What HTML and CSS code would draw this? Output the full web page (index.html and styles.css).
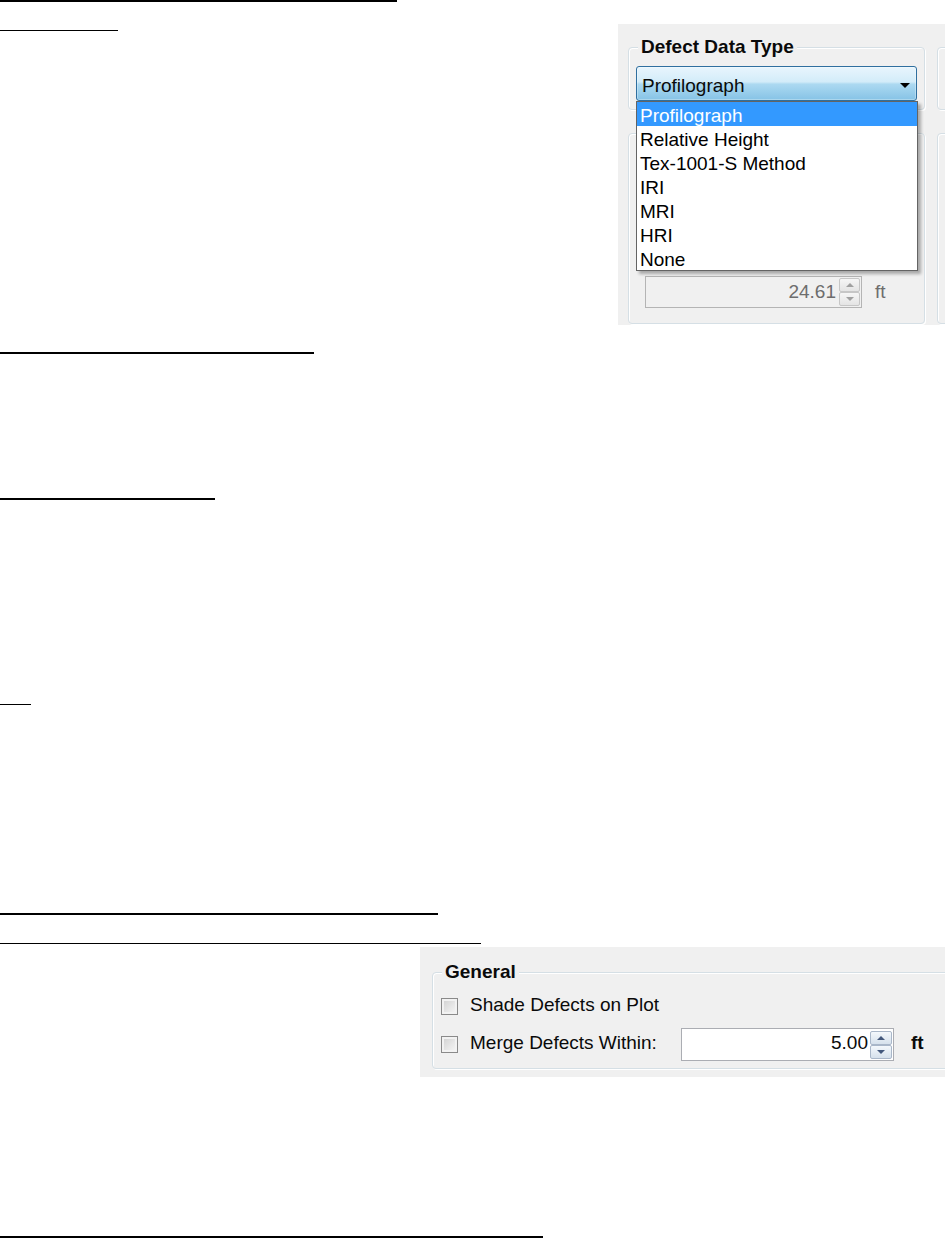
FILE: index.html
```html
<!DOCTYPE html>
<html>
<head>
<meta charset="utf-8">
<link rel="stylesheet" href="styles.css">
</head>
<body>
<div class="page">
  <div class="rule thick w397 mt0"></div>
  <div class="top-row">
    <div class="rule thin w118 mt6"></div>
    <div class="panel panel-defect">
      <div class="gb gb-type">
        <div class="gb-title">Defect Data Type</div>
        <div class="combo"><span>Profilograph</span><span class="caret"></span></div>
      </div>
      <div class="gb gb-side"></div>
      <div class="gb gb-params">
        <div class="spin-row">
          <div class="num num-disabled">
            <span class="val">24.61</span>
            <span class="spin"><span class="spin-btn up"></span><span class="spin-btn down"></span></span>
          </div>
          <span class="unit unit-disabled">ft</span>
        </div>
      </div>
      <div class="gb gb-side"></div>
      <ul class="dropdown">
        <li class="sel">Profilograph</li>
        <li>Relative Height</li>
        <li>Tex-1001-S Method</li>
        <li>IRI</li>
        <li>MRI</li>
        <li>HRI</li>
        <li>None</li>
      </ul>
    </div>
  </div>
  <div class="rule thick w314 mt27"></div>
  <div class="rule thick w215 mt144"></div>
  <div class="rule thin w31 mt204"></div>
  <div class="rule thick w438 mt208"></div>
  <div class="rule thin w481 mt28"></div>
  <div class="panel panel-general">
    <div class="gb gb-general">
      <div class="gb-title">General</div>
      <div class="check-row row1">
        <span class="cb"></span>
        <span class="lbl">Shade Defects on Plot</span>
      </div>
      <div class="check-row row2">
        <span class="cb"></span>
        <span class="lbl lbl-merge">Merge Defects Within:</span>
        <div class="num num-white">
          <span class="val">5.00</span>
          <span class="spin spin-blue"><span class="spin-btn up"></span><span class="spin-btn down"></span></span>
        </div>
        <span class="unit unit-bold">ft</span>
      </div>
    </div>
  </div>
  <div class="rule thick w543 mt159"></div>
</div>
</body>
</html>
```

FILE: styles.css
```css
html, body {
  margin: 0;
  padding: 0;
  background: #ffffff;
}

.page {
  width: 945px;
  height: 1238px;
  overflow: hidden;
  font-family: "Liberation Sans", Arial, sans-serif;
}

.rule { background: #000; }
.thick { height: 2px; }
.thin { height: 1px; }
.w397 { width: 397px; }
.w118 { width: 118px; }
.w314 { width: 314px; }
.w215 { width: 215px; }
.w31 { width: 31px; }
.w438 { width: 438px; }
.w481 { width: 481px; }
.w543 { width: 543px; }
.mt0 { margin-top: 0; }
.mt6 { margin-top: 6px; }
.mt27 { margin-top: 27px; }
.mt144 { margin-top: 144px; }
.mt204 { margin-top: 204px; }
.mt208 { margin-top: 208px; }
.mt28 { margin-top: 28px; }
.mt159 { margin-top: 159px; }

.top-row {
  margin-top: 22px;
  display: flex;
  justify-content: space-between;
  align-items: flex-start;
}

.panel {
  background: #f0f0f0;
  color: #0a0a0a;
  font-size: 19px;
  line-height: 22px;
}

.panel-defect {
  position: relative;
  width: 327px;
  height: 301px;
  box-sizing: border-box;
  padding: 23px 0 1px 10px;
  display: grid;
  grid-template-columns: 297px 30px;
  grid-template-rows: 63px 191px;
  column-gap: 12px;
  row-gap: 23px;
  overflow: hidden;
}

.gb {
  box-sizing: border-box;
  border: 1px solid #d5dfe5;
  border-radius: 4px;
  box-shadow: inset 1px 1px 0 #fff, 1px 1px 0 #fff;
}

.gb-title {
  font-weight: bold;
  margin: -12px 0 0 9px;
  padding: 0 3px;
  background: #f0f0f0;
  width: max-content;
  color: #0a0a0a;
}

.combo {
  margin: 8px 0 0 7px;
  width: 281px;
  height: 35px;
  box-sizing: border-box;
  border: 1px solid #2f6f9f;
  border-radius: 3px;
  background: linear-gradient(to bottom, #e8f5fd 0%, #d3ecf9 45%, #acd9f1 52%, #86c3e6 100%);
  box-shadow: inset 0 0 0 1px rgba(255,255,255,0.3);
  display: flex;
  align-items: center;
  justify-content: space-between;
  padding: 4px 6px 0 5px;
  color: #0a0a0a;
}

.caret {
  width: 0;
  height: 0;
  border-left: 5px solid transparent;
  border-right: 5px solid transparent;
  border-top: 5px solid #000;
}

.gb-params {
  display: flex;
  flex-direction: column;
  justify-content: flex-end;
  padding: 0 0 15px 16px;
}

.spin-row {
  display: flex;
  align-items: center;
}

.num {
  box-sizing: border-box;
  display: flex;
  align-items: center;
  justify-content: flex-end;
}

.num-disabled {
  width: 217px;
  height: 32px;
  border: 1px solid #b4b4b4;
  background: #f0f0f0;
  color: #6d6d6d;
}

.num-white {
  width: 213px;
  height: 33px;
  border: 1px solid #abadb3;
  background: #fff;
  color: #0a0a0a;
  padding-bottom: 3px;
}

.spin {
  display: flex;
  flex-direction: column;
  width: 21px;
  height: 28px;
  margin: 0 1px 0 3px;
}

.num-white .spin {
  margin: 3px 1px 0 2px;
  width: 22px;
}

.spin-btn {
  flex: 1;
  box-sizing: border-box;
  border: 1px solid #c6c6c6;
  border-radius: 2px;
  background: linear-gradient(to bottom, #f6f6f6, #e4e4e4);
  display: flex;
  align-items: center;
  justify-content: center;
}

.spin-btn::before {
  content: "";
  width: 0;
  height: 0;
  border-left: 4px solid transparent;
  border-right: 4px solid transparent;
}

.spin-btn.up::before { border-bottom: 4px solid #a0a0a0; }
.spin-btn.down::before { border-top: 4px solid #a0a0a0; }

.spin-blue .spin-btn {
  border-color: #a9b7c9;
  background: linear-gradient(to bottom, #f4f8fc, #d6e1ec);
}
.spin-blue .spin-btn.up::before { border-bottom-color: #43587c; }
.spin-blue .spin-btn.down::before { border-top-color: #43587c; }

.unit-disabled {
  margin-left: 13px;
  color: #6d6d6d;
}

.dropdown {
  position: absolute;
  left: 18px;
  top: 77px;
  width: 282px;
  margin: 0;
  padding: 0;
  list-style: none;
  background: #fff;
  border: 1px solid #646464;
  box-sizing: border-box;
  box-shadow: 3px 3px 3px rgba(0, 0, 0, 0.3);
  color: #000;
}

.dropdown li {
  height: 24px;
  line-height: 28px;
  padding-left: 3px;
  overflow: visible;
}

.dropdown li.sel {
  background: #3399ff;
  color: #fff;
}

.panel-general {
  margin: 3px 0 0 420px;
  width: 525px;
  height: 130px;
  box-sizing: border-box;
  padding: 25px 0 0 12px;
  overflow: hidden;
}

.gb-general {
  width: 560px;
  height: 97px;
}

.check-row {
  display: flex;
  align-items: center;
  margin-left: 8px;
}

.row1 {
  height: 25px;
  margin-top: 11px;
}

.row2 {
  height: 33px;
  margin-top: 9px;
}

.cb {
  width: 17px;
  height: 17px;
  box-sizing: border-box;
  border: 1px solid #8a8a8a;
  background: linear-gradient(135deg, #cfcfcf 0%, #e6e6e6 55%, #f7f7f7 100%);
  box-shadow: inset 0 0 0 2px #f2f2f2;
  margin-right: 12px;
  flex: none;
}

.lbl {
  padding-bottom: 4px;
  white-space: nowrap;
}

.lbl-merge {
  width: 211px;
}

.unit-bold {
  margin-left: 17px;
  font-weight: bold;
  padding-bottom: 4px;
}
```
